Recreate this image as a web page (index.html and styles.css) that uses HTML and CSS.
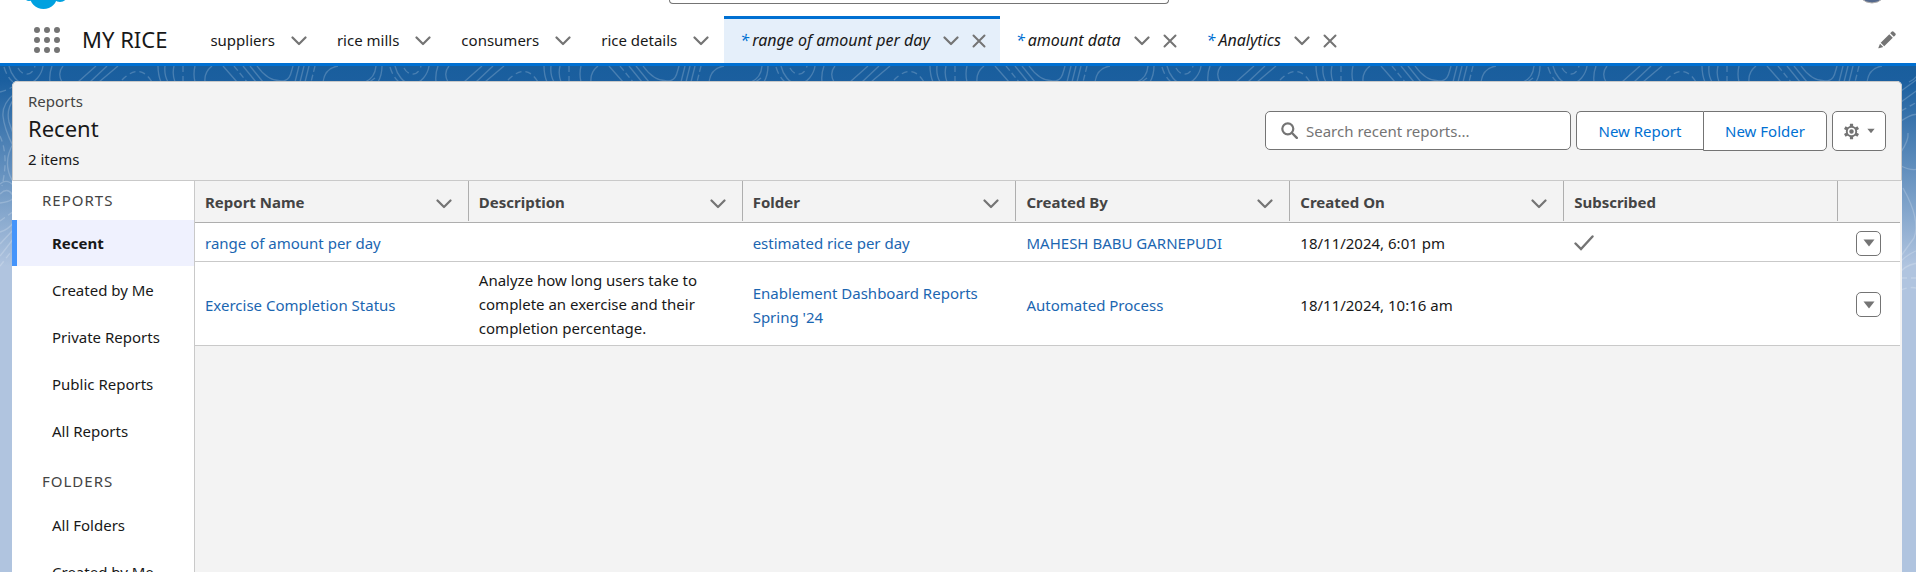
FILE: index.html
```html
<!DOCTYPE html>
<html lang="en">
<head>
<meta charset="utf-8">
<title>Recent | Reports</title>
<link rel="stylesheet" href="styles.css">
</head>
<body>
<svg class="sprite" aria-hidden="true">
  <symbol id="chevron" viewBox="0 0 16 10"><path d="M1.500 1.500L8 8l6.500-6.500" fill="none" stroke="currentColor" stroke-width="2.200" stroke-linecap="round" stroke-linejoin="round"/></symbol>
  <symbol id="close" viewBox="0 0 14 14"><path d="M1.500 1.500l11 11M12.500 1.500l-11 11" fill="none" stroke="currentColor" stroke-width="2" stroke-linecap="round"/></symbol>
  <symbol id="caret" viewBox="0 0 12 8"><path d="M.5.5h11L6 7.500z" fill="currentColor"/></symbol>
</svg>

<header class="global">
  <svg class="cloud" viewBox="0 0 48 16" fill="#00a1e0" aria-hidden="true"><circle cx="19.500" cy="-5" r="14"/><circle cx="36" cy="-6" r="8"/><circle cx="5" cy="-4" r="5"/></svg>
  <input class="global-search" type="search" aria-label="Search">
  <svg class="avatar" viewBox="0 0 32 16" aria-hidden="true"><circle cx="16" cy="-12" r="15" fill="#54698d" stroke="#b0adab"/></svg>
</header>

<nav class="nav">
  <button class="launcher" aria-label="App Launcher">
    <svg viewBox="0 0 26 26" fill="#747474"><circle cx="3" cy="3" r="3"/><circle cx="13" cy="3" r="3"/><circle cx="23" cy="3" r="3"/><circle cx="3" cy="13" r="3"/><circle cx="13" cy="13" r="3"/><circle cx="23" cy="13" r="3"/><circle cx="3" cy="23" r="3"/><circle cx="13" cy="23" r="3"/><circle cx="23" cy="23" r="3"/></svg>
  </button>
  <span class="app-name">MY RICE</span>
  <ul class="tabs">
    <li class="tab"><a href="#">suppliers</a><button aria-label="suppliers list"><svg class="chev"><use href="#chevron"/></svg></button></li>
    <li class="tab"><a href="#">rice mills</a><button aria-label="rice mills list"><svg class="chev"><use href="#chevron"/></svg></button></li>
    <li class="tab"><a href="#">consumers</a><button aria-label="consumers list"><svg class="chev"><use href="#chevron"/></svg></button></li>
    <li class="tab"><a href="#">rice details</a><button aria-label="rice details list"><svg class="chev"><use href="#chevron"/></svg></button></li>
    <li class="tab temp active"><a href="#"><span class="star">*</span>range of amount per day</a><button aria-label="Actions"><svg class="chev"><use href="#chevron"/></svg></button><button aria-label="Close range of amount per day"><svg class="x"><use href="#close"/></svg></button></li>
    <li class="tab temp"><a href="#"><span class="star">*</span>amount data</a><button aria-label="Actions"><svg class="chev"><use href="#chevron"/></svg></button><button aria-label="Close amount data"><svg class="x"><use href="#close"/></svg></button></li>
    <li class="tab temp"><a href="#"><span class="star">*</span>Analytics</a><button aria-label="Actions"><svg class="chev"><use href="#chevron"/></svg></button><button aria-label="Close Analytics"><svg class="x"><use href="#close"/></svg></button></li>
  </ul>
  <button class="edit" aria-label="Edit navigation">
    <svg viewBox="0 0 18 18" fill="#747474"><path d="M12.200 2.200l3.600 3.600 1.400-1.400c.8-.8.8-1.600 0-2.200L15.700.8c-.7-.7-1.500-.7-2.100 0zM11.300 3.200l3.500 3.500-8.600 8.600-3.500-3.500zM2 12.700L5.300 16 .9 17.300c-.5.100-.7-.1-.5-.6z"/></svg>
  </button>
</nav>

<main class="stage">
  <svg class="topo" aria-hidden="true">
    <defs>
      <pattern id="lines" width="386" height="400" patternUnits="userSpaceOnUse">
        <g fill="none" stroke="#fff" stroke-opacity=".2" stroke-width="1.300">
          <path d="M9 0c2 8 8 18 17 18S42 8 43 0"/>
          <path d="M18 2c4 8 14 9 17-2M4 1q3 10 9 15" stroke-dasharray="7 4"/>
          <path d="M52 0q-3 8-2 16M63 0q-6 7-1 16M96 0L78 16M107 0L90 16M118 0L99 16"/>
          <path d="M122 14q18-18 30 2M183 0v16" stroke-dasharray="6 4"/>
          <path d="M158 0q0 9 3 16M165 0q-1 9 3 16M174 0q-2 8 1 16M195 0q-2 8 0 16M212 0q-8 6-7 16M223 0l14 16M243 0l13 16M250 0l13 16M257 0c7 10 14 15 24 15s10-9 12-15M299 0l-4 16M304 0l-4 16M309 0l-4 16M338 0q-13 2-15 16M376 0q-1 12-11 16M382 0q0 9-4 16"/>
          <path d="M234 0l13 16M315 0l-4 16" stroke-dasharray="6 3"/>
          <path d="M357 25l18-13M357 36l18-13M357 55q18-12 20-2M357 86q8-12 7-19M357 100q12 6 20 2M359 122q18 32 11 50l-13 18M357 195q8-8 20-12M357 205q8-8 20-8"/>
          <path d="M357 45l18-10M357 212h20M357 224q12-5 20 0" stroke-dasharray="6 4"/>
          <path d="M14 28Q2 38 3 50t10 30M14 33Q6 43 9 56l5 14M14 76q-12 20-2 38M0 118q7-6 14 2M0 128q7-7 12 0t-12 9M0 166q8-2 14-10M0 178l14-15M0 190l14-18"/>
          <path d="M0 26q8-2 14-6M0 70q9 20 2 50M0 155l14-10M0 200l14-18" stroke-dasharray="6 4"/>
        </g>
      </pattern>
    </defs>
    <rect width="100%" height="244" fill="url(#lines)"/>
  </svg>
  <section class="card">
    <header class="card-head">
      <div>
        <p class="crumb">Reports</p>
        <h1>Recent</h1>
        <p class="count">2 items</p>
      </div>
      <div class="actions">
        <label class="search">
          <svg viewBox="0 0 17 17" fill="none" stroke="#747474" aria-hidden="true"><circle cx="6.800" cy="6.800" r="5.500" stroke-width="2.200"/><path d="M11 11l4.800 4.800" stroke-width="2.400" stroke-linecap="round"/></svg>
          <input type="text" placeholder="Search recent reports..." aria-label="Search recent reports">
        </label>
        <div class="group"><button>New Report</button><button>New Folder</button></div>
        <button class="gear" aria-label="Settings">
          <svg class="cog" viewBox="0 0 18 18"><g fill="#747474"><circle cx="9" cy="9" r="6"/><path d="M7.300.8h3.400v16.400H7.300z"/><path d="M7.300.8h3.400v16.400H7.300z" transform="rotate(60 9 9)"/><path d="M7.300.8h3.400v16.400H7.300z" transform="rotate(120 9 9)"/></g><circle cx="9" cy="9" r="3.200" fill="#747474" stroke="#fff" stroke-width="1.600"/></svg>
          <svg class="caret small"><use href="#caret"/></svg>
        </button>
      </div>
    </header>
    <div class="body">
      <aside class="side">
        <h2>REPORTS</h2>
        <ul>
          <li><a class="current" href="#">Recent</a></li>
          <li><a href="#">Created by Me</a></li>
          <li><a href="#">Private Reports</a></li>
          <li><a href="#">Public Reports</a></li>
          <li><a href="#">All Reports</a></li>
        </ul>
        <h2>FOLDERS</h2>
        <ul>
          <li><a href="#">All Folders</a></li>
          <li><a href="#">Created by Me</a></li>
        </ul>
      </aside>
      <div class="list">
        <table>
          <colgroup><col><col><col><col><col><col><col class="menu-col"></colgroup>
          <thead>
            <tr>
              <th scope="col"><div>Report Name<svg class="chev"><use href="#chevron"/></svg></div></th>
              <th scope="col"><div>Description<svg class="chev"><use href="#chevron"/></svg></div></th>
              <th scope="col"><div>Folder<svg class="chev"><use href="#chevron"/></svg></div></th>
              <th scope="col"><div>Created By<svg class="chev"><use href="#chevron"/></svg></div></th>
              <th scope="col"><div>Created On<svg class="chev"><use href="#chevron"/></svg></div></th>
              <th scope="col"><div>Subscribed</div></th>
              <th scope="col"><div></div></th>
            </tr>
          </thead>
          <tbody>
            <tr>
              <td><a href="#">range of amount per day</a></td>
              <td></td>
              <td><a href="#">estimated rice per day</a></td>
              <td><a href="#">MAHESH BABU GARNEPUDI</a></td>
              <td>18/11/2024, 6:01 pm</td>
              <td><svg class="check" viewBox="0 0 20 16" role="img" aria-label="Subscribed"><path d="M1.500 8.500l5.500 5.500L18.500 1.500" fill="none" stroke="#747474" stroke-width="2.400" stroke-linecap="round"/></svg></td>
              <td class="menu"><button aria-label="Show actions"><svg class="caret"><use href="#caret"/></svg></button></td>
            </tr>
            <tr>
              <td><a href="#">Exercise Completion Status</a></td>
              <td>Analyze how long users take to complete an exercise and their completion percentage.</td>
              <td><a href="#">Enablement Dashboard Reports Spring '24</a></td>
              <td><a href="#">Automated Process</a></td>
              <td>18/11/2024, 10:16 am</td>
              <td></td>
              <td class="menu"><button aria-label="Show actions"><svg class="caret"><use href="#caret"/></svg></button></td>
            </tr>
          </tbody>
        </table>
      </div>
    </div>
  </section>
</main>
</body>
</html>
```
FILE: styles.css
```css
* { box-sizing: border-box; }

body {
  margin: 0;
  height: 100vh;
  overflow: hidden;
  display: flex;
  flex-direction: column;
  font: 15px/24px "Noto Sans", "Open Sans", sans-serif;
  color: #181818;
  background: #b0c4df;
}

ul, h1, h2, p { margin: 0; padding: 0; list-style: none; font-weight: 400; }
a { color: inherit; text-decoration: none; }
button { font: inherit; color: inherit; background: none; border: 0; padding: 0; }
svg { display: block; flex: none; }
.sprite { position: absolute; width: 0; height: 0; }

.chev { width: 16px; height: 10px; color: #747474; }
.x { width: 14px; height: 14px; color: #747474; }
.caret { width: 12px; height: 8px; color: #747474; }
.caret.small { width: 8px; height: 6px; }

/* Global header, scrolled mostly out of view */
.global {
  flex: none;
  height: 16px;
  display: grid;
  grid-template-columns: 645fr 500px 719fr;
  align-items: start;
  padding: 0 28px 0 24px;
  background: #fff;
}
.cloud { width: 48px; height: 16px; }
.global-search {
  width: 100%;
  height: 4px;
  border: 1px solid #747474;
  border-top: 0;
  border-radius: 0 0 5px 5px;
  background: #fff;
}
.avatar { justify-self: end; width: 32px; height: 16px; }

/* App navigation */
.nav {
  flex: none;
  height: 50px;
  display: flex;
  border-bottom: 3px solid #0070d2;
  background: #fff;
  padding: 0 20px 0 34px;
}
.launcher { align-self: center; }
.launcher svg { width: 26px; height: 26px; }
.app-name { margin: 0 28px 0 22px; font-size: 22px; line-height: 46px; white-space: nowrap; }
.tabs { display: flex; flex: 1; }
.tab {
  display: flex;
  align-items: center;
  gap: 16px;
  padding: 0 15px;
  border-top: 3px solid transparent;
  white-space: nowrap;
}
.tab a { padding-bottom: 2px; }
.tab.temp { gap: 13px; padding: 0 14px 0 16px; font-size: 16px; font-style: italic; }
.tab.active { border-top-color: #0070d2; background: #e5effa; }
.star { margin-right: 3px; color: #0070d2; }
.edit svg { width: 18px; height: 18px; }

/* Backdrop */
.stage {
  flex: 1;
  min-height: 0;
  position: relative;
  display: flex;
  padding: 15px 14px 0 12px;
  background: linear-gradient(#195e9d 0, #1b5f9f 15px, #b0c4df 200px);
}
.topo { position: absolute; top: 0; left: 0; width: 100%; height: 100%; }

.card {
  position: relative;
  flex: 1;
  min-width: 0;
  display: flex;
  flex-direction: column;
  border-radius: 5px 5px 0 0;
  background: #f3f3f3;
  overflow: hidden;
}
.card-head {
  flex: none;
  height: 100px;
  display: flex;
  justify-content: space-between;
  padding: 7px 15px 0 15px;
  border: 1px solid #c9c9c9;
  border-radius: 5px 5px 0 0;
}
.crumb { line-height: 24px; color: #444; }
h1 { font-size: 22px; line-height: 31px; }
.count { line-height: 30px; }

.actions { display: flex; align-items: flex-start; gap: 5px; padding-top: 22px; }
.search {
  display: flex;
  align-items: center;
  gap: 8px;
  width: 306px;
  height: 39px;
  padding: 0 15px;
  border: 1px solid #747474;
  border-radius: 5px;
  background: #fff;
}
.search svg { width: 17px; height: 17px; }
.search input { flex: 1; min-width: 0; padding: 0; border: 0; outline: 0; font: inherit; background: none; }
.search input::placeholder { color: #747474; opacity: 1; }
.group { display: flex; align-items: flex-start; }
.group button {
  width: 127px;
  height: 39px;
  border: 1px solid #747474;
  border-right: 0;
  border-radius: 5px 0 0 5px;
  background: #fff;
  color: #0070d2;
}
.group button + button { width: 124px; height: 40px; border-right: 1px solid #747474; border-radius: 0 5px 5px 0; }
.gear {
  display: flex;
  align-items: center;
  justify-content: center;
  gap: 7px;
  width: 54px;
  height: 40px;
  border: 1px solid #747474;
  border-radius: 5px;
  background: #fff;
}
.cog { width: 17px; height: 17px; }

.body { flex: 1; min-height: 0; display: flex; }

/* Side navigation */
.side { flex: none; width: 183px; border-right: 1px solid #c9c9c9; background: #fff; }
.side h2 { padding: 7px 0 8px 30px; font-size: 15px; line-height: 24px; letter-spacing: 1px; color: #444; }
.side ul + h2 { padding: 15px 0 9px 30px; }
.side li a { display: block; padding: 11px 0 11px 35px; border-left: 5px solid transparent; }
.side li + li { border-top: 1px solid #fff; }
.side .current { border-left-color: #4494fb; background: #eff1fe; font-weight: 700; }

/* Report list */
.list { flex: 1; min-width: 0; padding-right: 2px; }
table { width: 100%; table-layout: fixed; border-collapse: separate; border-spacing: 0; }
.menu-col { width: 62px; }
th { padding: 0 0 1px; border-bottom: 1px solid #aeaeae; font-weight: 700; color: #444; text-align: left; }
th div {
  display: flex;
  align-items: center;
  justify-content: space-between;
  height: 40px;
  padding: 2px 16px 0 10px;
  border-right: 1px solid #aeaeae;
}
th .chev { margin-top: 4px; }
th:last-child div { border-right: 0; }
td { padding: 8px 10px 6px; border-bottom: 1px solid #c9c9c9; background: #fff; vertical-align: middle; }
td a { color: #1b66b1; }
td:nth-child(2) { padding-block: 6px 5px; }
.check { width: 20px; height: 16px; }
.menu { padding: 2px 18px 0; }
.menu button {
  display: flex;
  align-items: center;
  justify-content: center;
  width: 25px;
  height: 25px;
  border: 1px solid #747474;
  border-radius: 5px;
}
```
